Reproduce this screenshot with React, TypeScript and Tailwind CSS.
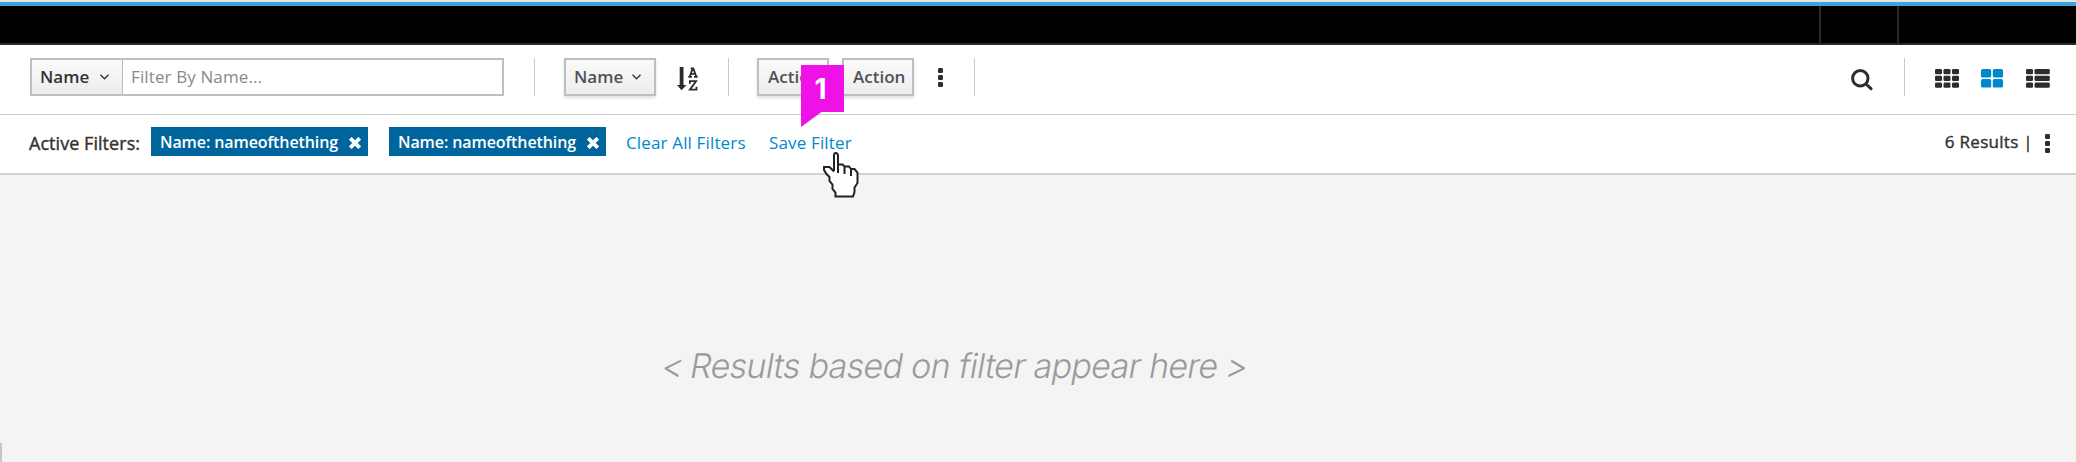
import type { ReactNode } from "react";

function Divider({ className = "" }: { className?: string }) {
  return <div className={`h-[38px] w-px shrink-0 bg-[#cbcbcb] ${className}`} />;
}

function Chevron({ className = "" }: { className?: string }) {
  return (
    <svg className={`h-[6px] w-[9px] shrink-0 ${className}`} viewBox="0 0 9 6" fill="none" stroke="#333" strokeWidth="1.3">
      <path d="M0.5 0.7 4.5 4.8 8.5 0.7" />
    </svg>
  );
}

function Kebab({ className = "" }: { className?: string }) {
  return (
    <svg className={`h-[19px] w-[5px] shrink-0 ${className}`} viewBox="0 0 5 19" fill="#2d2d2d">
      <rect width="5" height="5" rx="1.2" />
      <rect y="7" width="5" height="5" rx="1.2" />
      <rect y="14" width="5" height="5" rx="1.2" />
    </svg>
  );
}

function Button({ children, className = "" }: { children: ReactNode; className?: string }) {
  return (
    <button
      className={`flex h-[38px] shrink-0 items-center border-2 border-[#bfbfbf] bg-linear-to-b from-[#fafafa] to-[#ededed] pb-px pl-[8px] text-[17px] font-semibold text-[#4d5258] shadow-[0_2px_3px_rgba(0,0,0,0.12)] ${className}`}
    >
      {children}
    </button>
  );
}

function Chip({ className = "" }: { className?: string }) {
  return (
    <div className={`flex h-[29px] w-[217px] shrink-0 items-center bg-[#00659c] pl-[9px] text-[16px] font-semibold text-white ${className}`}>
      <span className="w-[189px] tracking-[-0.1px] whitespace-nowrap">Name: nameofthething</span>
      <svg className="mt-[2px] h-[12px] w-[12px]" viewBox="0 0 12 12" stroke="#fff" strokeWidth="3.8">
        <path d="M1.3 1.3 10.7 10.7M10.7 1.3 1.3 10.7" />
      </svg>
    </div>
  );
}

export default function App() {
  return (
    <div className="relative flex h-[462px] w-[2076px] flex-col overflow-hidden bg-[#f4f4f4] font-['Open_Sans',sans-serif] text-[#333]">
      <div className="h-[2px] shrink-0 bg-[#e4e4e4]" />
      <div className="h-[4px] shrink-0 bg-[#39a5dc]" />
      <header className="flex h-[39px] shrink-0 border-b-2 border-[#292929] bg-black pl-[1819px]">
        <div className="w-[80px] border-x-2 border-[#292929]" />
      </header>

      <div className="flex h-[70px] shrink-0 items-start border-b border-[#cdcdcd] bg-white pt-[13px]">
        <div className="ml-[30px] flex h-[38px] w-[474px] border-2 border-[#bfbfbf]">
          <div className="flex w-[91px] items-center border-r border-[#bbb] bg-linear-to-b from-[#fafafa] to-[#ededed] pb-px pl-[8px] text-[17px] font-semibold">
            <span className="w-[60px]">Name</span>
            <Chevron />
          </div>
          <div className="flex flex-1 items-center pb-px pl-[8px] text-[17px] tracking-[0.12px] text-[#858a90]">Filter By Name...</div>
        </div>
        <Divider className="ml-[30px]" />
        <Button className="ml-[29px] w-[92px]">
          <span className="w-[58px] text-left">Name</span>
          <Chevron />
        </Button>
        <svg className="mt-[9px] ml-[21px] h-[24px] w-[22px]" viewBox="0 0 22 24" fill="#2d2d2d">
          <path d="M2.7 0h3.8v18h3L4.6 23.3 0 18h2.7z" />
          <g fill="none" stroke="#2d2d2d" strokeWidth="1.8">
            <path d="M12.7 9.6 15.7 1.5H16.3L19.3 9.6M11.3 9.8h3.6M17 9.8h3.7M13.7 6.9h4.6M13.7 1.5h2.6" />
            <path d="M12.9 16.8v-2.7h6.2L12.9 22.6h6.6v-2.8" />
          </g>
        </svg>
        <Divider className="ml-[29px]" />
        <Button className="ml-[28px] w-[72px] pl-[9px]">Action</Button>
        <Button className="ml-[13px] w-[72px] pl-[9px]">Action</Button>
        <Kebab className="mt-[10px] ml-[24px]" />
        <Divider className="ml-[31px]" />
        <svg className="mt-[11px] ml-[876px] h-[22px] w-[22px]" viewBox="0 0 22 22" fill="none" stroke="#2d2d2d" strokeWidth="3">
          <circle cx="9.3" cy="9.3" r="7.7" />
          <path d="M15 15 20 19.7" strokeLinecap="round" />
        </svg>
        <Divider className="ml-[31px]" />
        <svg className="mt-[11px] ml-[30px] h-[19px] w-[24px]" viewBox="0 0 24 19" fill="#2d2d2d">
          {[0, 8.5, 17].map((x) => [0, 6.8, 13.6].map((y) => <rect key={`${x}-${y}`} x={x} y={y} width="7" height="5.2" rx="1.3" />))}
        </svg>
        <svg className="mt-[11px] ml-[22px] h-[19px] w-[22px]" viewBox="0 0 22 19" fill="#0088ce">
          {[0, 11.8].map((x) => [0, 10].map((y) => <rect key={`${x}-${y}`} x={x} y={y} width="10.2" height="8.6" rx="1.6" />))}
        </svg>
        <svg className="mt-[11px] ml-[23px] h-[19px] w-[24px]" viewBox="0 0 24 19" fill="#2d2d2d">
          {[0, 6.8, 13.6].map((y) => (
            <g key={y}>
              <rect y={y} width="7" height="5.2" rx="1.3" />
              <rect x="8.5" y={y} width="15.3" height="5.2" rx="1.3" />
            </g>
          ))}
        </svg>
      </div>

      <div className="flex h-[60px] shrink-0 items-start border-b-2 border-[#d1d1d1] bg-white pt-[12px] text-[17px] leading-[32px] whitespace-nowrap">
        <span className="ml-[29px] w-[122px] text-[18px] tracking-[0.05px] [-webkit-text-stroke:0.4px_#333]">Active Filters:</span>
        <Chip />
        <Chip className="ml-[21px]" />
        <a className="ml-[20px] w-[143px] tracking-[0.15px] text-[#0088ce]">Clear All Filters</a>
        <a className="tracking-[0.15px] text-[#0088ce]">Save Filter</a>
        <span className="ml-auto leading-[29px] tracking-[0.3px] [-webkit-text-stroke:0.4px_#333]">6 Results |</span>
        <Kebab className="mt-[7px] mr-[26px] ml-[12px]" />
      </div>

      <main className="flex flex-1 pt-[167px] pl-[662px]">
        <p className="h-[48px] skew-x-[-10deg] font-['Inter',sans-serif] text-[34px] leading-[48px] font-light tracking-[-0.68px] whitespace-nowrap text-[#9a9a9a]">
          <span className="tracking-[-1.6px]">&lt; </span>Results based on filter appear here<span className="tracking-[-1.6px]"> &gt;</span>
        </p>
      </main>
      <div className="absolute bottom-0 left-0 h-[19px] w-[2px] bg-[#c6c6c6]" />

      <div className="absolute top-[65px] left-[801px] h-[62px] w-[43px]">
        <svg className="absolute inset-0" width="43" height="62" viewBox="0 0 43 62">
          <path d="M0 0H43V47H20.5L0 62z" fill="#ee12e6" />
        </svg>
        <span className="relative block pt-px pr-[4px] text-center font-['Inter',sans-serif] text-[28px] leading-[47px] font-bold text-white">1</span>
      </div>

      <svg className="absolute top-[151px] left-[822px]" width="38" height="47" viewBox="0 0 38 47">
        <path
          d="M11.500 4.500Q11.500 2 13.500 2T16 4.500V13.500H20.500L23 15H27.500L31 18H33.500L35.500 21.500V32L32.500 36.500V41L30.500 45.500H13V41.500L10.500 38V33.500L7.500 30V26L4.500 23L2.500 19V16H7.500L11.500 19z"
          fill="#fff"
        />
        <path
          d="M12 20V4.500Q12 2 13.800 2T16 4.500V22M16 13.500H20.500L22.500 15.500V23M22.500 15.500H27L29 18V25M29 18H32.500L35.500 21.500V32L32.500 36.500V41L31 45.500H13.500V41.500L10.500 38V33.500L7.500 30V26L4.500 23L2 19V16H7.500L12 20.500"
          fill="none"
          stroke="#222"
          strokeWidth="2"
        />
      </svg>
    </div>
  );
}
